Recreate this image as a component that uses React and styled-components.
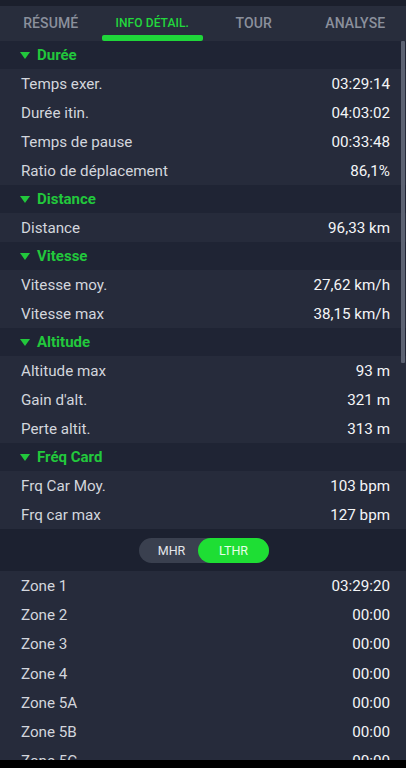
import React from "react";
import styled, { createGlobalStyle } from "styled-components";

const Global = createGlobalStyle`
  html, body { margin: 0; padding: 0; background: #000; }
  body { font-family: Roboto, "Noto Sans", "Liberation Sans", sans-serif; }
  * { box-sizing: border-box; }
`;

const Screen = styled.div`
  width: 406px;
  height: 768px;
  display: flex;
  flex-direction: column;
  overflow: hidden;
  background: #262b3b;
`;

const TopStrip = styled.div`
  height: 6px;
  flex: none;
  background: #1b1f2c;
`;

const TabBar = styled.div`
  height: 35px;
  flex: none;
  display: grid;
  grid-template-columns: repeat(4, 1fr);
  background: #282d3c;
`;

const Tab = styled.div`
  position: relative;
  display: flex;
  align-items: center;
  justify-content: center;
  padding-bottom: 2px;
  font-size: ${(p) => (p.$active ? "12px" : "14px")};
  font-weight: 500;
  letter-spacing: 0.1px;
  color: ${(p) => (p.$active ? "#22d83c" : "#8b909c")};
  &::after {
    content: "";
    display: ${(p) => (p.$active ? "block" : "none")};
    position: absolute;
    left: 0;
    right: 0;
    bottom: 0;
    height: 6px;
    border-radius: 2px;
    background: #1fd63a;
  }
`;

const Scroller = styled.div`
  position: relative;
  flex: 1;
  overflow: hidden;
`;

const ScrollThumb = styled.div`
  position: absolute;
  top: 0;
  right: 1px;
  width: 4px;
  height: 322px;
  background: #5c6272;
  border-radius: 1px;
`;

const SectionHeader = styled.div`
  height: 28px;
  display: flex;
  align-items: center;
  gap: 7px;
  padding-left: 20px;
  background: #1f2434;
  color: #22c83c;
  font-size: 15px;
  font-weight: 700;
`;

const Triangle = styled.span`
  width: 0;
  height: 0;
  border-left: 5.5px solid transparent;
  border-right: 5.5px solid transparent;
  border-top: 7px solid #22c83c;
  margin-top: 1px;
`;

const Row = styled.div`
  height: ${(p) => p.$h || 29}px;
  display: flex;
  align-items: center;
  justify-content: space-between;
  padding: 0 16px 0 21px;
  font-size: 15.2px;
  background: #262b3b;
`;

const Label = styled.span`
  color: #d3d6dd;
`;

const Value = styled.span`
  color: #f4f5f7;
`;

const ToggleBand = styled.div`
  height: 42px;
  display: flex;
  align-items: center;
  justify-content: center;
  background: #1c2130;
`;

const Toggle = styled.div`
  display: flex;
  width: 130px;
  height: 25px;
  border-radius: 13px;
  background: #3a404f;
  margin-left: 2px;
`;

const ToggleOption = styled.div`
  flex: ${(p) => (p.$active ? "0 0 71px" : "1")};
  display: flex;
  align-items: center;
  justify-content: center;
  border-radius: 13px;
  font-size: 12.5px;
  color: ${(p) => (p.$active ? "#e8ffe8" : "#e4e6ea")};
  background: ${(p) => (p.$active ? "#1ede34" : "transparent")};
  padding-left: ${(p) => (p.$active ? "0" : "6px")};
`;

const NavBar = styled.div`
  height: 8px;
  flex: none;
  background: #000;
`;

const sections = [
  {
    title: "Durée",
    rows: [
      ["Temps exer.", "03:29:14"],
      ["Durée itin.", "04:03:02"],
      ["Temps de pause", "00:33:48"],
      ["Ratio de déplacement", "86,1%"],
    ],
  },
  { title: "Distance", rows: [["Distance", "96,33 km"]] },
  {
    title: "Vitesse",
    rows: [
      ["Vitesse moy.", "27,62 km/h"],
      ["Vitesse max", "38,15 km/h"],
    ],
  },
  {
    title: "Altitude",
    rows: [
      ["Altitude max", "93 m"],
      ["Gain d'alt.", "321 m"],
      ["Perte altit.", "313 m"],
    ],
  },
  {
    title: "Fréq Card",
    rows: [
      ["Frq Car Moy.", "103 bpm"],
      ["Frq car max", "127 bpm"],
    ],
  },
];

const zones = [
  ["Zone 1", "03:29:20"],
  ["Zone 2", "00:00"],
  ["Zone 3", "00:00"],
  ["Zone 4", "00:00"],
  ["Zone 5A", "00:00"],
  ["Zone 5B", "00:00"],
  ["Zone 5C", "00:00"],
];

const tabs = ["RÉSUMÉ", "INFO DÉTAIL.", "TOUR", "ANALYSE"];

export default function App() {
  return (
    <>
      <Global />
      <Screen>
        <TopStrip />
        <TabBar>
          {tabs.map((t, i) => (
            <Tab key={t} $active={i === 1}>
              {t}
            </Tab>
          ))}
        </TabBar>
        <Scroller>
          {sections.map((s) => (
            <React.Fragment key={s.title}>
              <SectionHeader>
                <Triangle />
                {s.title}
              </SectionHeader>
              {s.rows.map(([l, v]) => (
                <Row key={l}>
                  <Label>{l}</Label>
                  <Value>{v}</Value>
                </Row>
              ))}
            </React.Fragment>
          ))}
          <ToggleBand>
            <Toggle>
              <ToggleOption>MHR</ToggleOption>
              <ToggleOption $active>LTHR</ToggleOption>
            </Toggle>
          </ToggleBand>
          {zones.map(([l, v]) => (
            <Row key={l} $h={29.3}>
              <Label>{l}</Label>
              <Value>{v}</Value>
            </Row>
          ))}
          <ScrollThumb />
        </Scroller>
        <NavBar />
      </Screen>
    </>
  );
}
